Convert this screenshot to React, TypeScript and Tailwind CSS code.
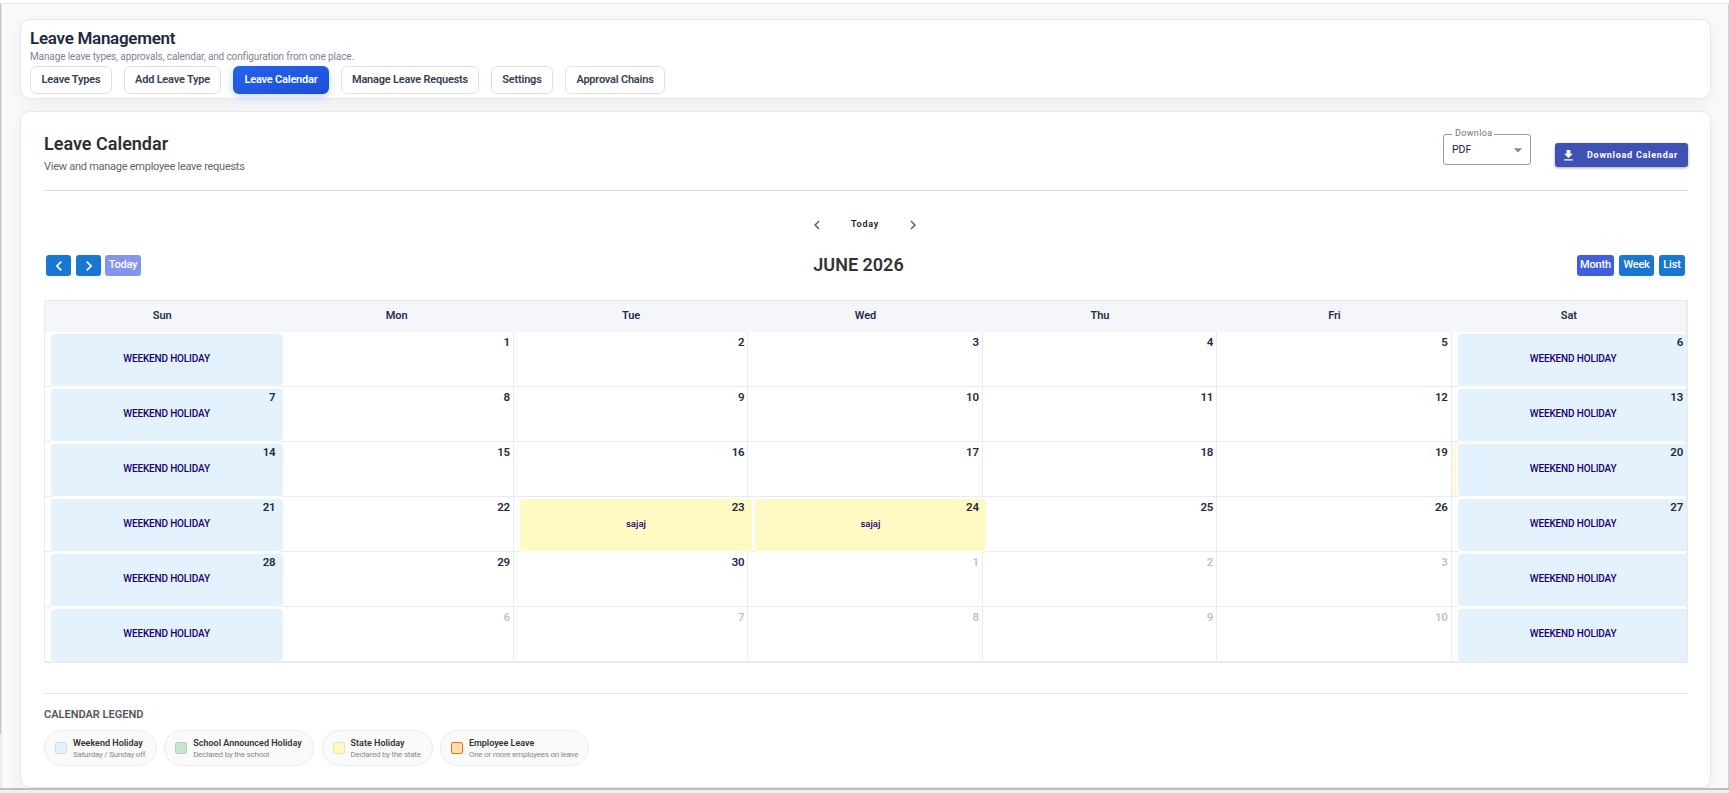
import clsx from "clsx";
import { MdArrowDropDown, MdChevronLeft, MdChevronRight, MdFileDownload } from "react-icons/md";

type CalendarEvent = { label: string; kind: "weekend" | "state" };
type Day = { date: number | null; muted?: boolean; today?: boolean; event?: CalendarEvent };

const tabs = [
  { label: "Leave Types", width: "w-[82px]" },
  { label: "Add Leave Type", width: "w-[97px]" },
  { label: "Leave Calendar", width: "w-[96px]", active: true },
  { label: "Manage Leave Requests", width: "w-[138px]" },
  { label: "Settings", width: "w-[62px]" },
  { label: "Approval Chains", width: "w-[100px]" },
];

const weekDays = ["Sun", "Mon", "Tue", "Wed", "Thu", "Fri", "Sat"];

const legend = [
  {
    title: "Weekend Holiday",
    text: "Saturday / Sunday off",
    swatch: "bg-[#e3f2fd] border-[#cddfeb]",
    width: "w-[113px]",
  },
  {
    title: "School Announced Holiday",
    text: "Declared by the school",
    swatch: "bg-[#c8e6c9] border-[#b4d2b6]",
    width: "w-[150px]",
  },
  {
    title: "State Holiday",
    text: "Declared by the state",
    swatch: "bg-[#fff9c4] border-[#e9e3b2]",
    width: "w-[111px]",
  },
  {
    title: "Employee Leave",
    text: "One or more employees on leave",
    swatch: "bg-[#ffe0b2] border-[#ff6f00]",
    width: "w-[149px]",
  },
];

// June 2026 starts on a Monday, the grid always shows six weeks
const days: Day[] = Array.from({ length: 42 }, (_, i) => {
  const weekend = i % 7 === 0 || i % 7 === 6;
  const inMonth = i >= 1 && i <= 30;
  let date: number | null = inMonth ? i : i - 30;
  if (weekend && !inMonth) date = null;

  let event: CalendarEvent | undefined;
  if (weekend) event = { label: "WEEKEND HOLIDAY", kind: "weekend" };
  if (i === 23 || i === 24) event = { label: "sajaj", kind: "state" };

  return { date, muted: !inMonth, today: i === 20, event };
});

function DayCell({ day, last }: { day: Day; last: boolean }) {
  return (
    <div
      className={clsx(
        "relative h-[55px] border-b border-[#e8ecf4]",
        !last && "border-r",
        day.today && "bg-[#fff9df]"
      )}
    >
      {day.event && (
        <div
          className={clsx(
            "absolute top-px left-[5.3px] z-10 flex h-[54px] w-[233.6px] items-center justify-center rounded-[4px] border border-white bg-clip-padding font-medium text-[#1a0070]",
            day.event.kind === "weekend"
              ? "bg-[#e3f2fd] pr-px pb-[3px] text-[10px] tracking-[-0.16px]"
              : "bg-[#fff9c4] pb-[2px] text-[9.5px]"
          )}
        >
          {day.event.label}
        </div>
      )}
      <div
        className={clsx(
          "relative z-20 flex justify-end pt-[3px] pr-[3px] text-[11.5px] leading-[14px] font-semibold tracking-[-0.25px]",
          day.muted ? "text-[#bfc2ca]" : "text-[#1f2a44]"
        )}
      >
        {day.date}
      </div>
    </div>
  );
}

function PageHeader() {
  return (
    <section className="h-[80px] shrink-0 rounded-[10px] border border-[#e6e8f0] bg-white px-[9px] pt-[8px] shadow-[0_4px_18px_rgba(15,23,42,0.06)]">
      <h1 className="text-[17px] leading-5 font-semibold tracking-[-0.28px] text-[#1e293b]">Leave Management</h1>
      <p className="h-[18px] text-[10px] leading-[17px] tracking-[-0.12px] text-[#7b8494]">
        Manage leave types, approvals, calendar, and configuration from one place.
      </p>
      <nav className="flex gap-3">
        {tabs.map((tab) => (
          <button
            key={tab.label}
            className={clsx(
              "h-[28px] rounded-md border text-[11px] font-semibold tracking-[-0.21px] whitespace-nowrap",
              tab.width,
              tab.active
                ? "border-transparent bg-linear-to-br from-[#2563eb] to-[#1d4ed8] bg-origin-border text-white shadow-[0_3px_8px_rgba(37,99,235,0.25)]"
                : "border-[#dbe2ee] bg-white text-[#334155]"
            )}
          >
            {tab.label}
          </button>
        ))}
      </nav>
    </section>
  );
}

function CalendarHeader() {
  return (
    <header className="flex h-[79px] justify-between border-b border-[#dcdcdc]">
      <div className="pt-[21px]">
        <h2 className="text-[18px] leading-[22px] font-semibold text-[#2d2f33]">Leave Calendar</h2>
        <p className="mt-[4px] text-[11px] leading-4 tracking-[-0.26px] text-[#666]">
          View and manage employee leave requests
        </p>
      </div>
      <div className="flex gap-6">
        <div className="relative mt-[22px] flex h-[31px] w-[88px] items-center justify-between rounded-[3px] border border-[#9a9a9a] pr-[2px] pl-2">
          <span className="absolute -top-[9px] left-2 bg-white pr-[2px] pl-[3px] text-[9px] leading-[14px] tracking-[0.35px] text-[#6f7280]">
            Downloa
          </span>
          <span className="text-[10.5px] text-[#1b2540]">PDF</span>
          <MdArrowDropDown size={20} color="#858891" />
        </div>
        <button className="mt-[31px] flex h-[24px] w-[133px] items-center rounded-[3px] bg-[#3f51b5] pl-[6px] text-[9px] font-bold tracking-[0.75px] whitespace-nowrap text-white shadow-[0_1px_3px_rgba(0,0,0,0.35)]">
          <MdFileDownload size={15} className="mr-[11px]" />
          <span className="pt-px">Download Calendar</span>
        </button>
      </div>
    </header>
  );
}

function Toolbar() {
  const button =
    "flex h-[21px] items-center justify-center rounded-[3px] pb-px text-[11px] leading-4 font-medium tracking-[-0.2px] text-white";

  return (
    <div className="flex h-[21px] items-center justify-between pr-[3px] pl-[2px]">
      <div className="flex w-[108px]">
        <button className="flex h-[21px] w-[25px] shrink-0 items-center justify-center rounded-[3px] bg-[#1976d2] text-white">
          <MdChevronLeft size={20} />
        </button>
        <button className="ml-[5px] flex h-[21px] w-[25px] shrink-0 items-center justify-center rounded-[3px] bg-[#1976d2] text-white">
          <MdChevronRight size={20} />
        </button>
        <button className={clsx(button, "ml-1 w-[36px] bg-[#8496ec]")}>Today</button>
      </div>
      <h2 className="mr-[14px] -mt-px text-[18px] leading-5 font-semibold text-[#333]">JUNE 2026</h2>
      <div className="flex w-[108px] gap-[5px]">
        <button className={clsx(button, "w-[37px] bg-[#3f5ee0]")}>Month</button>
        <button className={clsx(button, "w-[35px] bg-[#1976d2]")}>Week</button>
        <button className={clsx(button, "w-[26px] bg-[#1976d2]")}>List</button>
      </div>
    </div>
  );
}

function Legend() {
  return (
    <footer className="mt-[30px] border-t border-[#e4e4e4] pt-[13px]">
      <h3 className="text-[11px] leading-4 font-semibold text-[#555]">CALENDAR LEGEND</h3>
      <div className="mt-[7px] flex gap-[7.3px]">
        {legend.map((item) => (
          <div
            key={item.title}
            className={clsx(
              "flex h-[36px] items-center gap-[6px] rounded-[18px] border border-[#ececec] bg-[#fafafa] pl-[10px] whitespace-nowrap",
              item.width
            )}
          >
            <span className={clsx("size-3 shrink-0 rounded-[2px] border", item.swatch)} />
            <div>
              <p className="text-[9px] leading-3 font-semibold text-[#333]">{item.title}</p>
              <p className="text-[8px] leading-[11px] tracking-[-0.22px] text-[#888]">{item.text}</p>
            </div>
          </div>
        ))}
      </div>
    </footer>
  );
}

export default function App() {
  return (
    <div className="flex h-[793px] w-[1729px] flex-col overflow-hidden bg-[#f0f0f0] font-['Roboto',sans-serif]">
      <div className="h-[4px] shrink-0 border-b border-[#e4e6ee] bg-white" />
      <div className="flex h-[784px] shrink-0 overflow-hidden">
        <div className="h-[730px] w-px shrink-0 bg-[#c3c3c3]" />
        <main className="flex flex-1 flex-col gap-3 overflow-hidden border-r border-l border-r-[#c5d3e2] border-l-[#e6e6ea] bg-[#fafafc] pt-[15px] pr-[17px] pl-[18px]">
          <PageHeader />
          <section className="h-[677px] shrink-0 rounded-[10px] border border-[#e6e8f0] bg-white pr-[22px] pl-[23px] shadow-[0_4px_18px_rgba(15,23,42,0.06)]">
            <CalendarHeader />
            <div className="mt-[25px] mb-[21px] flex h-[18px] items-center justify-center pr-[2px] text-[#5b6172]">
              <MdChevronLeft size={18} />
              <span className="mr-[25px] ml-[25px] pb-[3px] text-[9px] leading-3 font-semibold tracking-[0.75px] text-[#17181c]">
                Today
              </span>
              <MdChevronRight size={18} />
            </div>
            <Toolbar />
            <div className="mt-6 overflow-hidden border border-r-2 border-b-2 border-[#e8ecf2]">
              <div className="grid h-[31px] grid-cols-7 bg-[#f4f6fa]">
                {weekDays.map((name) => (
                  <div
                    key={name}
                    className="flex items-center justify-center text-[11px] font-semibold tracking-[-0.1px] text-[#24304a]"
                  >
                    {name}
                  </div>
                ))}
              </div>
              <div className="-mb-px grid grid-cols-7">
                {days.map((day, i) => (
                  <DayCell key={i} day={day} last={i % 7 === 6} />
                ))}
              </div>
            </div>
            <Legend />
          </section>
        </main>
      </div>
      <div className="h-[2px] shrink-0 bg-[#bdbdbd]" />
    </div>
  );
}
